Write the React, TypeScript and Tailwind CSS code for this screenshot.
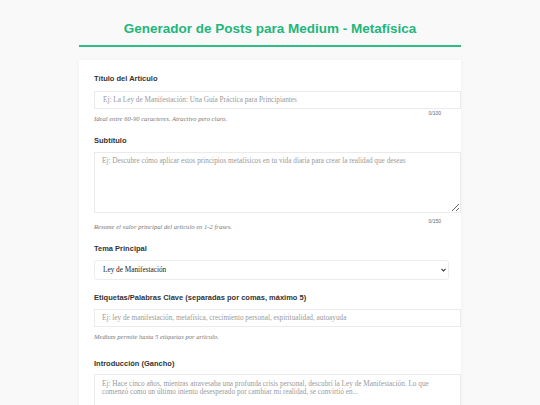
import { useState } from "react"

const sans = "font-['Liberation_Sans',Arial,sans-serif]"
const serif = "font-['Liberation_Serif','Times_New_Roman',serif]"

const temas = [
  "Ley de Manifestación",
  "Ley de Atracción",
  "Ley de Vibración",
  "Ley de Correspondencia",
  "Ley de Causa y Efecto",
]

function Label({ children, className = "" }: { children: React.ReactNode; className?: string }) {
  return (
    <label className={`block ${sans} text-[7.5px] leading-[10px] font-bold text-[#333] ${className}`}>
      {children}
    </label>
  )
}

function Helper({ children, className = "" }: { children: React.ReactNode; className?: string }) {
  return <p className={`${serif} italic text-[6.6px] leading-[7px] text-[#777] ${className}`}>{children}</p>
}

function Counter({ value, max, className = "" }: { value: number; max: number; className?: string }) {
  return (
    <div className={`${sans} text-right pr-[8px] text-[5px] leading-[5px] text-[#666] ${className}`}>
      {value}/{max}
    </div>
  )
}

const fieldBase = `block ${serif} text-[7.25px] font-normal text-[#222] placeholder:text-[#9a9a9a] bg-white border border-[#ebebeb] outline-none`

export default function App() {
  const [titulo, setTitulo] = useState("")
  const [subtitulo, setSubtitulo] = useState("")
  const [tema, setTema] = useState(temas[0])
  const [etiquetas, setEtiquetas] = useState("")
  const [intro, setIntro] = useState("")

  return (
    <div className="min-h-screen bg-[#f9f9f9] pt-[21px]">
      <div className="w-[382px] mx-auto">
        <h1
          className={`${sans} text-center text-[13.5px] leading-[16px] font-bold text-[#1fb67b] pb-[8px] border-b-2 border-[#2dbb86]`}
        >
          Generador de Posts para Medium - Metafísica
        </h1>

        <div className="mt-[13px] bg-white pt-[13.5px] pl-[15px] pr-[12px] pb-[30px] shadow-[0_0_4px_rgba(0,0,0,0.04)]">
          {/* titulo */}
          <div className="mb-[14px]">
            <Label className="mb-[7.5px]">Título del Artículo</Label>
            <input
              value={titulo}
              onChange={(e) => setTitulo(e.target.value.slice(0, 100))}
              placeholder="Ej: La Ley de Manifestación: Una Guía Práctica para Principiantes"
              className={`${fieldBase} w-[calc(100%+12px)] h-[18px] px-[8px]`}
            />
            <Counter value={titulo.length} max={100} className="mt-[1.5px]" />
            <Helper className="-mt-[1px]">Ideal entre 60-90 caracteres. Atractivo pero claro.</Helper>
          </div>

          {/* subtitulo */}
          <div className="mb-[14px]">
            <Label className="mb-[6px]">Subtítulo</Label>
            <textarea
              value={subtitulo}
              onChange={(e) => setSubtitulo(e.target.value.slice(0, 150))}
              placeholder="Ej: Descubre cómo aplicar estos principios metafísicos en tu vida diaria para crear la realidad que deseas"
              className={`${fieldBase} w-[calc(100%+12px)] h-[61px] px-[7px] pt-[4px] leading-[8px]`}
            />
            <Counter value={subtitulo.length} max={150} className="mt-[6.5px]" />
            <Helper className="-mt-[1px]">Resume el valor principal del artículo en 1-2 frases.</Helper>
          </div>

          {/* tema */}
          <div className="mb-[12.5px]">
            <Label className="mb-[6px]">Tema Principal</Label>
            <div className="relative">
              <select
                value={tema}
                onChange={(e) => setTema(e.target.value)}
                className={`${fieldBase} appearance-none w-full h-[20px] pl-[8px] pr-[12px] rounded-[3px] border-[#ededed]`}
              >
                {temas.map((t) => (
                  <option key={t}>{t}</option>
                ))}
              </select>
              <svg
                className="absolute right-[3px] top-[8px] pointer-events-none"
                width="5"
                height="4"
                viewBox="0 0 5 4"
              >
                <path d="M0.5 0.8 L2.5 3 L4.5 0.8" fill="none" stroke="#333" strokeWidth="1.1" />
              </svg>
            </div>
          </div>

          {/* etiquetas */}
          <div className="mb-[18.5px]">
            <Label className="mb-[6.5px]">Etiquetas/Palabras Clave (separadas por comas, máximo 5)</Label>
            <input
              value={etiquetas}
              onChange={(e) => setEtiquetas(e.target.value)}
              placeholder="Ej: ley de manifestación, metafísica, crecimiento personal, espiritualidad, autoayuda"
              className={`${fieldBase} w-[calc(100%+12px)] h-[18px] px-[7px]`}
            />
            <Helper className="mt-[6px]">Medium permite hasta 5 etiquetas por artículo.</Helper>
          </div>

          {/* introduccion */}
          <div>
            <Label className="mb-[5.5px]">Introducción (Gancho)</Label>
            <textarea
              value={intro}
              onChange={(e) => setIntro(e.target.value)}
              placeholder="Ej: Hace cinco años, mientras atravesaba una profunda crisis personal, descubrí la Ley de Manifestación. Lo que comenzó como un último intento desesperado por cambiar mi realidad, se convirtió en..."
              className={`${fieldBase} w-[calc(100%+12px)] h-[80px] px-[7px] pt-[5px] leading-[8px]`}
            />
          </div>
        </div>
      </div>
    </div>
  )
}
